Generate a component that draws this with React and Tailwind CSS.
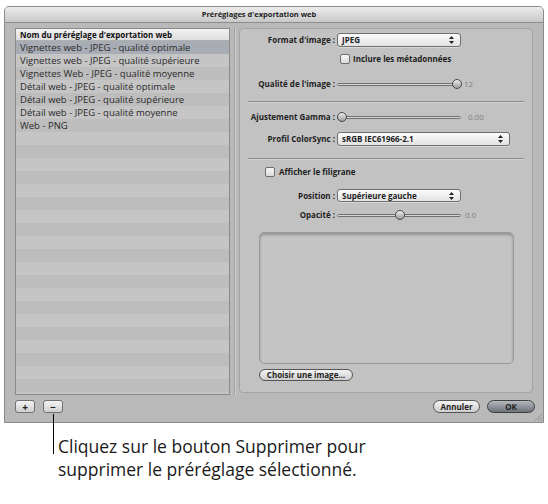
import React from "react";

const rows = [
  "Vignettes web - JPEG - qualité optimale",
  "Vignettes web - JPEG - qualité supérieure",
  "Vignettes Web - JPEG - qualité moyenne",
  "Détail web - JPEG - qualité optimale",
  "Détail web - JPEG - qualité supérieure",
  "Détail web - JPEG - qualité moyenne",
  "Web - PNG",
];

function Arrows() {
  return (
    <svg width="5" height="8" viewBox="0 0 5 8" className="shrink-0">
      <path d="M2.5 0 L5 3 L0 3 Z" fill="#222" />
      <path d="M2.5 8 L5 5 L0 5 Z" fill="#222" />
    </svg>
  );
}

function Select({ w, h, children }) {
  return (
    <div
      className={`${w} ${h} flex items-center justify-between rounded-[3px] border border-[#6f6f6f] bg-gradient-to-b from-[#fbfbfb] to-[#e2e2e2] pl-[4px] pr-[6px] text-[8px] font-bold text-[#1e1e1e] shadow-[0_1px_0_#d8d8d8]`}
    >
      <span>{children}</span>
      <Arrows />
    </div>
  );
}

function Checkbox() {
  return (
    <div className="w-[10px] h-[10px] shrink-0 rounded-[2px] border border-[#6f6f6f] bg-gradient-to-b from-[#f6f6f6] to-[#dcdcdc]" />
  );
}

function Slider({ trackW, knobX, value, valueGap }) {
  return (
    <div className="flex items-center">
      <div className={`relative ${trackW} h-[12px] flex items-center`}>
        <div className="w-full h-[3px] rounded-full border border-[#707070] bg-[#d6d6d6]" />
        <div
          className="absolute top-[1px] w-[10px] h-[10px] rounded-full border border-[#4a4a4a] bg-gradient-to-b from-[#eeeeee] to-[#9c9c9c]"
          style={{ left: knobX }}
        />
      </div>
      <span className={`${valueGap} text-[8px] text-[#7f7f7f]`}>{value}</span>
    </div>
  );
}

function Label({ children }) {
  return (
    <div className="w-[97px] shrink-0 pr-[2px] text-right text-[8px] font-bold text-[#1e1e1e] leading-[12px] whitespace-nowrap">
      {children}
    </div>
  );
}

function Sep() {
  return (
    <div className="mx-[8px] h-[2px] border-t border-[#8c8c8c] border-b border-b-[#d2d2d2]" />
  );
}

export default function App() {
  const stripes = Array.from({ length: 28 });
  return (
    <div className="relative w-[548px] h-[504px] bg-white font-['Open_Sans',sans-serif] overflow-hidden">
      <div className="ml-[4px] pt-[6px]">
        <div className="w-[540px] h-[417px] rounded-t-[5px] border border-[#8a8a8a] bg-[#b9b9b9] flex flex-col">
          {/* title bar */}
          <div className="h-[16px] rounded-t-[4px] border-b border-[#8e8e8e] bg-gradient-to-b from-[#ececec] to-[#c8c8c8] flex items-center justify-center pr-[30px] text-[7.5px] font-bold text-[#222]">
            Préréglages d'exportation web
          </div>
          {/* body */}
          <div className="flex pl-[10px] pt-[5px]">
            {/* list */}
            <div className="w-[215px] h-[367px] border border-[#8a8a8a] overflow-hidden flex flex-col">
              <div className="h-[12px] shrink-0 bg-gradient-to-b from-[#f2f2f2] to-[#dedede] border-b border-[#b0b0b0] pl-[4px] text-[8px] font-bold leading-[11px] text-[#111]">
                Nom du préréglage d'exportation web
              </div>
              {stripes.map((_, i) => {
                const bg =
                  i === 0
                    ? "bg-[#a8acb5]"
                    : i % 2 === 1
                    ? "bg-[#c5c5c5]"
                    : "bg-[#bdbdbd]";
                return (
                  <div
                    key={i}
                    className={`h-[13px] shrink-0 ${bg} pl-[4px] text-[9.5px] leading-[13px] text-[#2a2a2a] whitespace-nowrap`}
                  >
                    {rows[i] || ""}
                  </div>
                );
              })}
            </div>
            {/* splitter */}
            <div className="w-[9px] flex justify-center">
              <div className="w-[2px] h-[367px] border-l border-[#a2a2a2] border-r border-r-[#cfcfcf]" />
            </div>
            {/* right panel */}
            <div className="w-[294px] h-[365px] rounded-[4px] border border-[#a3a3a3] bg-[#c2c2c2] flex flex-col">
              <div className="mt-[4px] flex items-center h-[14px]">
                <Label>Format d'image :</Label>
                <Select w="w-[124px]" h="h-[14px]">JPEG</Select>
              </div>
              <div className="mt-[7px] h-[10px] flex items-center gap-[3px] pl-[100px]">
                <Checkbox />
                <span className="text-[8px] font-bold text-[#1e1e1e]">Inclure les métadonnées</span>
              </div>
              <div className="mt-[14px] h-[12px] flex items-center">
                <Label>Qualité de l'image :</Label>
                <Slider trackW="w-[125px]" knobX="115px" value="12" valueGap="ml-[2px]" />
              </div>
              <div className="mt-[11px]">
                <Sep />
              </div>
              <div className="mt-[8px] h-[12px] flex items-center">
                <Label>Ajustement Gamma :</Label>
                <Slider trackW="w-[124px]" knobX="0px" value="0.00" valueGap="ml-[7px]" />
              </div>
              <div className="mt-[9px] flex items-center h-[14px]">
                <Label>Profil ColorSync :</Label>
                <Select w="w-[173px]" h="h-[14px]">sRGB IEC61966-2.1</Select>
              </div>
              <div className="mt-[12px]">
                <Sep />
              </div>
              <div className="mt-[7px] h-[10px] flex items-center gap-[4px] pl-[25px]">
                <Checkbox />
                <span className="text-[8px] font-bold text-[#1e1e1e]">Afficher le filigrane</span>
              </div>
              <div className="mt-[12px] flex items-center h-[13px]">
                <Label>Position :</Label>
                <Select w="w-[124px]" h="h-[13px]">Supérieure gauche</Select>
              </div>
              <div className="mt-[7px] h-[12px] flex items-center">
                <Label>Opacité :</Label>
                <Slider trackW="w-[124px]" knobX="58px" value="0.0" valueGap="ml-[4px]" />
              </div>
              <div className="mt-[11px] ml-[19px] w-[255px] h-[132px] rounded-[5px] border border-[#9a9a9a] bg-[#c4c4c4] shadow-[inset_0_2px_3px_rgba(0,0,0,0.25)]" />
              <div className="mt-[5px] ml-[19px]">
                <div className="w-[94px] h-[12px] rounded-full border border-[#555] bg-gradient-to-b from-[#f4f4f4] to-[#cdcdcd] flex items-center justify-center text-[8px] font-bold text-[#1e1e1e]">
                  Choisir une image…
                </div>
              </div>
            </div>
          </div>
          {/* bottom bar */}
          <div className="flex-1 relative flex items-start pt-[5px] pl-[10px] pr-[8px]">
            <div className="w-[20px] h-[13px] rounded-[3px] border border-[#707070] bg-gradient-to-b from-[#f4f4f4] to-[#cfcfcf] flex items-center justify-center text-[10px] font-bold leading-none text-[#222]">
              +
            </div>
            <div className="ml-[8px] w-[20px] h-[13px] rounded-[3px] border border-[#707070] bg-gradient-to-b from-[#f4f4f4] to-[#cfcfcf] flex items-center justify-center text-[10px] font-bold leading-none text-[#222]">
              −
            </div>
            <div className="flex-1" />
            <div className="w-[47px] h-[13px] rounded-full border border-[#555] bg-gradient-to-b from-[#f4f4f4] to-[#cdcdcd] flex items-center justify-center text-[8px] font-bold text-[#1e1e1e]">
              Annuler
            </div>
            <div className="ml-[7px] w-[48px] h-[13px] rounded-full border border-[#3f3f3f] bg-gradient-to-b from-[#b5b8bd] to-[#6e727a] flex items-center justify-center text-[8px] font-bold text-[#1e1e1e]">
              OK
            </div>
            <svg width="8" height="8" viewBox="0 0 8 8" className="absolute right-[1px] bottom-[1px]">
              <path d="M8 1 L1 8 M8 4 L4 8 M8 7 L7 8" stroke="#8a8a8a" strokeWidth="0.8" />
            </svg>
          </div>
        </div>
      </div>
      {/* callout */}
      <div className="absolute left-[53px] top-[414px] w-px h-[40px] bg-black" />
      <div className="ml-[58px] mt-[12px] text-[17.5px] leading-[23px] text-[#1a1a1a]">
        Cliquez sur le bouton Supprimer pour
        <br />
        supprimer le préréglage sélectionné.
      </div>
    </div>
  );
}
